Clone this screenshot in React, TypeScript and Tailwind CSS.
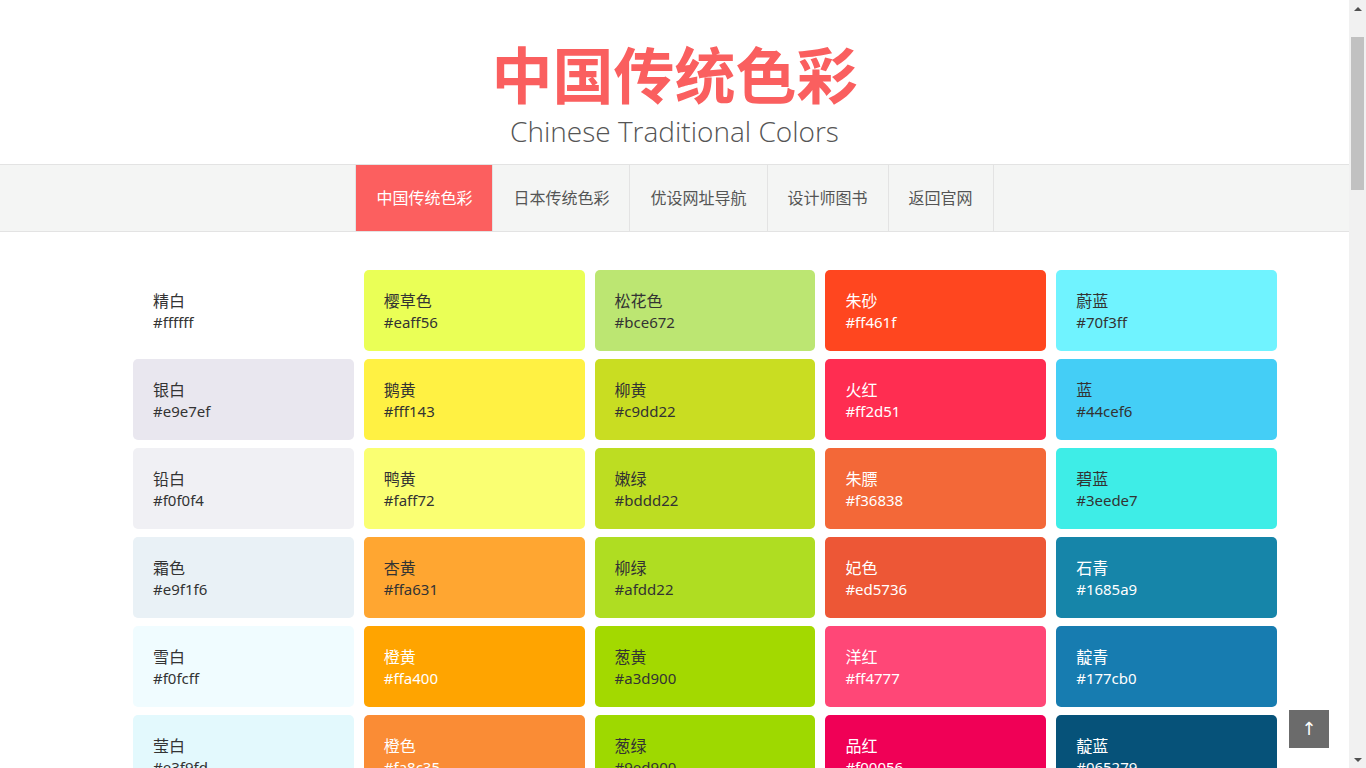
type Swatch = { name: string; hex: string; light?: boolean }

// one array per column, read top to bottom
const columns: Swatch[][] = [
  [
    { name: '精白', hex: '#ffffff' },
    { name: '银白', hex: '#e9e7ef' },
    { name: '铅白', hex: '#f0f0f4' },
    { name: '霜色', hex: '#e9f1f6' },
    { name: '雪白', hex: '#f0fcff' },
    { name: '莹白', hex: '#e3f9fd' },
    { name: '鸭卵青', hex: '#e0eee8' },
    { name: '鱼肚白', hex: '#fcefe8' },
  ],
  [
    { name: '樱草色', hex: '#eaff56' },
    { name: '鹅黄', hex: '#fff143' },
    { name: '鸭黄', hex: '#faff72' },
    { name: '杏黄', hex: '#ffa631' },
    { name: '橙黄', hex: '#ffa400', light: true },
    { name: '橙色', hex: '#fa8c35', light: true },
    { name: '橘黄', hex: '#ff8936', light: true },
    { name: '橘红', hex: '#ff7500', light: true },
  ],
  [
    { name: '松花色', hex: '#bce672' },
    { name: '柳黄', hex: '#c9dd22' },
    { name: '嫩绿', hex: '#bddd22' },
    { name: '柳绿', hex: '#afdd22' },
    { name: '葱黄', hex: '#a3d900' },
    { name: '葱绿', hex: '#9ed900' },
    { name: '油绿', hex: '#00bc12', light: true },
    { name: '绿沈', hex: '#0c8918', light: true },
  ],
  [
    { name: '朱砂', hex: '#ff461f', light: true },
    { name: '火红', hex: '#ff2d51', light: true },
    { name: '朱膘', hex: '#f36838', light: true },
    { name: '妃色', hex: '#ed5736', light: true },
    { name: '洋红', hex: '#ff4777', light: true },
    { name: '品红', hex: '#f00056', light: true },
    { name: '胭脂', hex: '#9d2933', light: true },
    { name: '朱红', hex: '#ff4c00', light: true },
  ],
  [
    { name: '蔚蓝', hex: '#70f3ff' },
    { name: '蓝', hex: '#44cef6' },
    { name: '碧蓝', hex: '#3eede7' },
    { name: '石青', hex: '#1685a9', light: true },
    { name: '靛青', hex: '#177cb0', light: true },
    { name: '靛蓝', hex: '#065279', light: true },
    { name: '藏青', hex: '#2e4e7e', light: true },
    { name: '藏蓝', hex: '#3b2e7e', light: true },
  ],
]

const swatches: Swatch[] = columns[0].flatMap((_, row) => columns.map(col => col[row]))

const navItems = ['中国传统色彩', '日本传统色彩', '优设网址导航', '设计师图书', '返回官网']

function Scrollbar() {
  return (
    <aside className="flex h-screen w-[17px] shrink-0 flex-col items-center bg-[#f1f1f1]">
      <div className="flex h-[17px] w-full items-center justify-center">
        <span className="h-0 w-0 border-x-[4px] border-b-[4px] border-x-transparent border-b-[#505050]" />
      </div>
      <div className="mt-[20px] h-[153px] w-[13px] bg-[#c1c1c1]" />
      <div className="flex-1" />
      <div className="flex h-[17px] w-full items-center justify-center">
        <span className="h-0 w-0 border-x-[4px] border-t-[4px] border-x-transparent border-t-[#505050]" />
      </div>
    </aside>
  )
}

export default function App() {
  return (
    <div className="flex h-screen overflow-hidden bg-white font-['Segoe_UI','Noto_Sans','Noto_Sans_CJK_SC',sans-serif]">
      <main className="min-w-0 flex-1 overflow-hidden">
        {/* Header */}
        <header className="flex flex-col items-center pt-[42px] pb-[16px]">
          <h1 className="text-[61px] leading-[62px] font-bold text-[#fa5f5f] font-['Noto_Sans_CJK_SC',sans-serif]">
            中国传统色彩
          </h1>
          <p className="mt-[10px] text-[28px] leading-[34px] font-light text-[#555] font-['Open_Sans','Noto_Sans',sans-serif]">
            Chinese Traditional Colors
          </p>
        </header>

        {/* Nav */}
        <nav className="flex justify-center border-y border-[#e3e3e3] bg-[#f4f5f4]">
          <ul className="flex border-l border-[#e3e3e3]">
            {navItems.map((item, i) => (
              <li
                key={item}
                className={
                  i === 0
                    ? 'flex h-[66px] items-center border-r border-[#e3e3e3] bg-[#fc5f5f] px-[20px] text-[16px] text-white'
                    : 'flex h-[66px] items-center border-r border-[#e3e3e3] px-[20px] text-[16px] text-[#555]'
                }
              >
                {item}
              </li>
            ))}
          </ul>
        </nav>

        {/* Colours */}
        <div className="ml-[133px] mt-[38px] grid w-[1144px] grid-cols-5 gap-x-[10px] gap-y-[8px] pb-10">
          {swatches.map(s => (
            <div
              key={s.hex}
              className={
                s.light
                  ? 'h-[81px] rounded-[5px] px-[20px] pt-[20px] text-white'
                  : 'h-[81px] rounded-[5px] px-[20px] pt-[20px] text-[#333]'
              }
              style={{ backgroundColor: s.hex }}
            >
              <p className="text-[16px] leading-[22px]">{s.name}</p>
              <p className="text-[15px] leading-[20px]">{s.hex}</p>
            </div>
          ))}
        </div>
      </main>

      <Scrollbar />

      {/* Back to top */}
      <button className="fixed bottom-[20px] right-[37px] flex h-[38px] w-[40px] items-center justify-center bg-[#6b6b6b] text-[18px] leading-none text-white font-['DejaVu_Sans',sans-serif]">
        ↑
      </button>
    </div>
  )
}
